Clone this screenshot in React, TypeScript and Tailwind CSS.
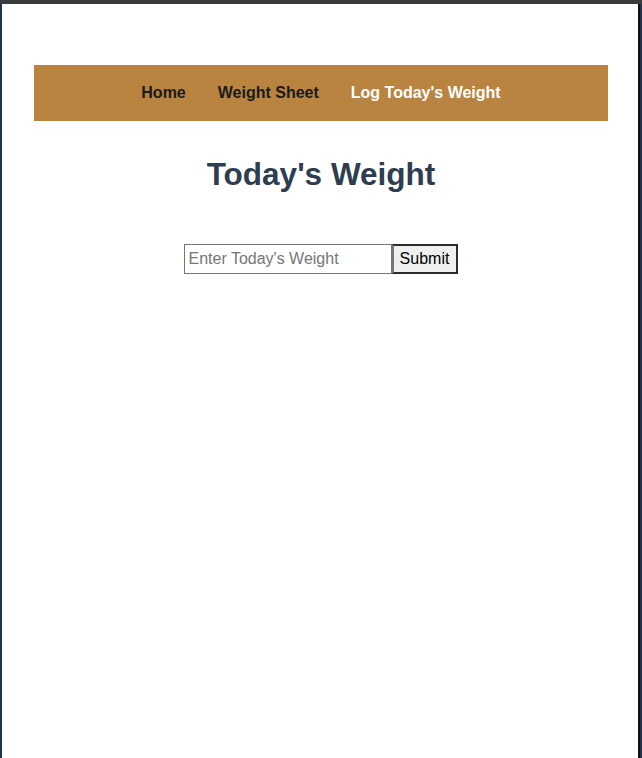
export default function App() {
  return (
    <div className="flex h-[758px] w-[642px] flex-col bg-white font-['Liberation_Sans',Arial,sans-serif]">
      {/* window top strip */}
      <div className="h-[4px] w-full shrink-0 bg-[#3a3b3f]" />
      <div className="flex min-h-0 flex-1">
        <div className="w-[2px] shrink-0 bg-[#1f3350]" />
        <main className="flex-1 bg-white">
          <nav className="ml-[32px] mt-[61px] flex h-[56px] w-[574px] items-center justify-center gap-8 bg-[#b8843f] text-[16px] font-bold">
            <a className="text-[#1a1a1a]">Home</a>
            <a className="text-[#1a1a1a]">Weight Sheet</a>
            <a className="text-white">Log Today's Weight</a>
          </nav>
          <h1 className="mt-[35px] ml-[2px] text-center text-[31.5px] font-bold leading-[37px] text-[#2c3e50]">
            Today's Weight
          </h1>
          <form className="mt-[51px] flex justify-center pl-[1px]">
            <input
              type="text"
              placeholder="Enter Today's Weight"
              className="h-[30px] w-[208px] border border-[#767676] px-[4px] text-[16px] text-black outline-none placeholder:text-[#767676]"
            />
            <button
              type="button"
              className="h-[30px] w-[66px] border-2 border-[#2b2b2b] border-l-[#767676] bg-[#efefef] text-[16px] text-black"
            >
              Submit
            </button>
          </form>
        </main>
        <div className="w-[2px] shrink-0 bg-[#111]" />
        <div className="w-[2px] shrink-0 bg-[#1f3350]" />
      </div>
    </div>
  );
}
